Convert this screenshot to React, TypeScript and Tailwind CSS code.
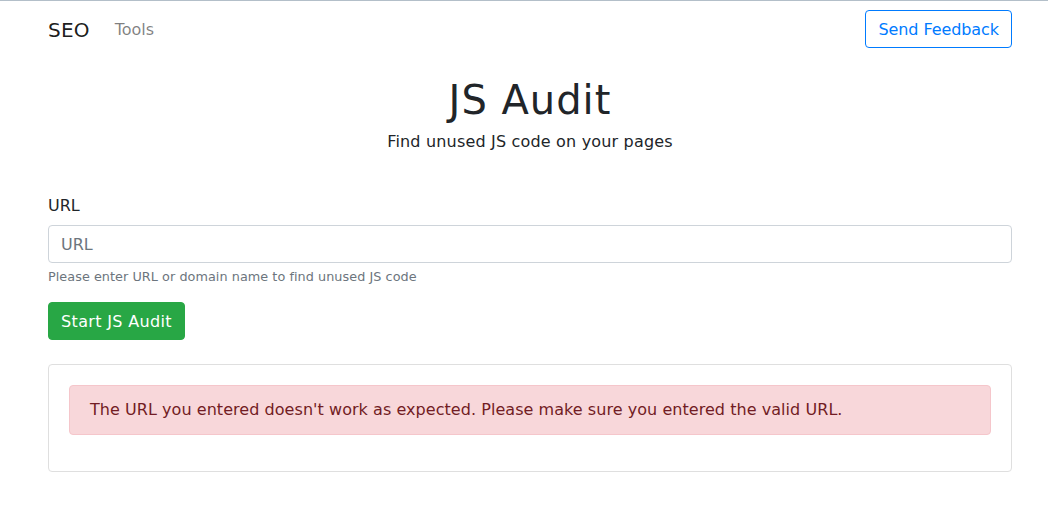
export default function App() {
  return (
    <div className="min-h-[514px] bg-white border-t border-[#b3bfc9] font-['DejaVu_Sans',sans-serif] text-[#212529] leading-normal">
      <nav className="flex items-center justify-between py-[9px] pl-12 pr-9">
        <div className="flex items-center pt-[2px]">
          <span className="text-xl text-black/90 tracking-[0.2px]">SEO</span>
          <span className="ml-[25px] text-base text-black/50">Tools</span>
        </div>
        <button className="h-[38px] px-3 pt-[2px] rounded border border-[#007bff] text-[#007bff] text-base tracking-[-0.08px]">
          Send Feedback
        </button>
      </nav>

      <main className="pl-12 pr-9">
        <h1 className="mt-[19px] text-center text-[40px] leading-[1.2] font-normal tracking-[1px]">
          JS Audit
        </h1>
        <p className="mt-[6px] text-center text-base tracking-[0.18px]">
          Find unused JS code on your pages
        </p>

        <form className="mt-10">
          <label className="block text-base mb-[7px]">URL</label>
          <input
            type="text"
            placeholder="URL"
            className="block w-full h-[38px] px-3 rounded border border-[#ced4da] text-base placeholder:text-[#6c757d] outline-none"
          />
          <small className="block mt-1 text-[12.8px] text-[#6c757d] tracking-[0.05px]">
            Please enter URL or domain name to find unused JS code
          </small>
          <button
            type="button"
            className="mt-4 h-[38px] px-3 pt-[2px] rounded border border-[#28a745] bg-[#28a745] text-white text-base tracking-[0.35px]"
          >
            Start JS Audit
          </button>
        </form>

        <div className="mt-6 p-5 rounded border border-[#dfdfdf]">
          <div className="mb-4 px-5 py-3 rounded border border-[#f5c6cb] bg-[#f8d7da] text-[#721c24] text-base tracking-[0.05px]">
            The URL you entered doesn't work as expected. Please make sure you entered the valid URL.
          </div>
        </div>
      </main>
    </div>
  );
}
